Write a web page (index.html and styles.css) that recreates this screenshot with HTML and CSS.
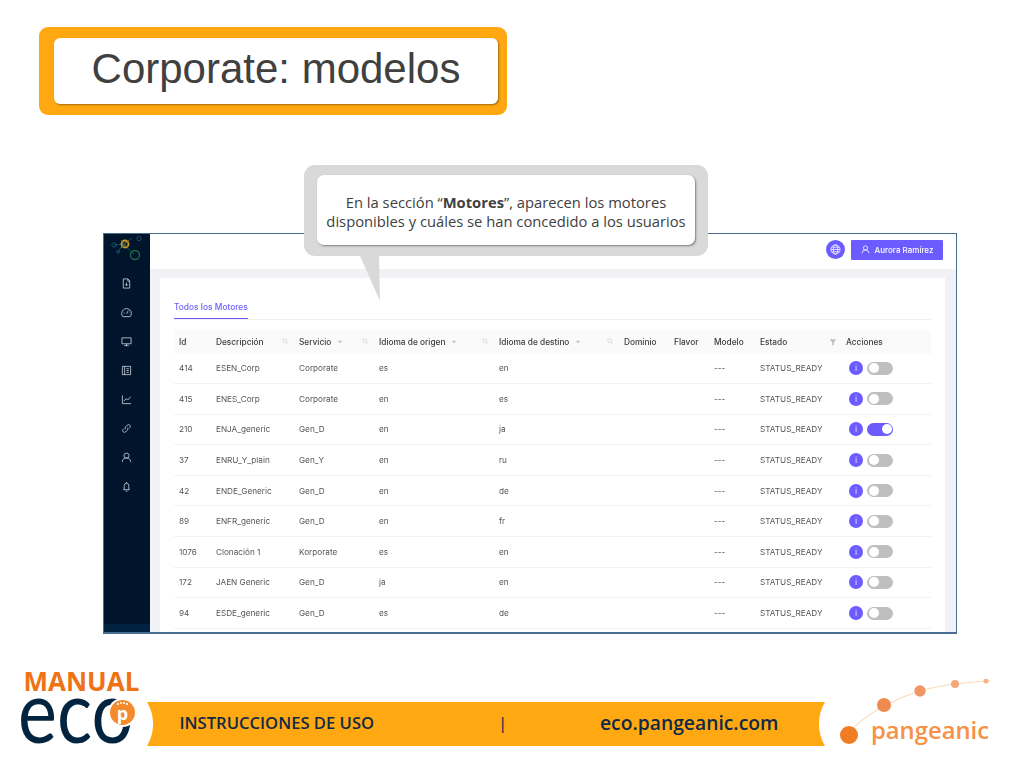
FILE: index.html
```html
<!DOCTYPE html>
<html lang="es">
<head>
<meta charset="utf-8">
<title>Corporate: modelos</title>
<link rel="stylesheet" href="styles.css">
</head>
<body>
<svg class="defs" width="0" height="0">
  <symbol id="s" viewBox="0 0 12 12"><circle cx="5" cy="5" r="3.6" fill="none" stroke="currentColor" stroke-width="1"/><path d="M7.8 7.8L11 11" stroke="currentColor" stroke-width="1"/></symbol>
  <symbol id="c" viewBox="0 0 10 6"><path d="M1 1h8L5 5z" fill="currentColor"/></symbol>
</svg>
<main class="slide">
  <div class="title-frame"><h1 class="title">Corporate: modelos</h1></div>

  <section class="window">
    <nav class="sidebar">
      <svg class="logo" viewBox="0 0 34 28" width="34" height="28" fill="none">
        <path d="M3 10L12 9L23 19M14 8L21 3M7 17L12 9" stroke="#0b5c63" stroke-width="1"/>
        <circle cx="14" cy="9" r="3.500" stroke="#c79a2a" stroke-width="1.800"/>
        <path d="M10 5L17 13M18 5L10 13" stroke="#8a6a2a" stroke-width=".8"/>
        <circle cx="24" cy="20" r="4.500" stroke="#1d6e46" stroke-width="1.300"/>
        <circle cx="3" cy="10" r="2.200" stroke="#14506e"/>
        <circle cx="28" cy="3.500" r="2.200" stroke="#14506e"/>
        <circle cx="7" cy="17" r="1.300" stroke="#14506e"/>
      </svg>
      <svg class="nav-icon" viewBox="0 0 12 12"><path d="M2.500 1h5l2 2v8h-7zM7.500 1v2.500h2M6 5v3.500M4.500 7l1.500 1.500L7.500 7"/></svg>
      <svg class="nav-icon" viewBox="0 0 12 12"><path d="M2 10.500a5.300 5.300 0 1 1 8 0zM6 7.500l2-3.500M3 6.500h1M8.500 6.500h.5"/></svg>
      <svg class="nav-icon" viewBox="0 0 12 12"><path d="M1 2h10v6.500H1zM6 8.500V10.500M3.500 10.500h5"/></svg>
      <svg class="nav-icon" viewBox="0 0 12 12"><path d="M1.500 1.500h9v9h-9zM4 1.500v9M6 4h2.500M6 6h2.500M6 8h2.500"/></svg>
      <svg class="nav-icon" viewBox="0 0 12 12"><path d="M1.500 1.500v9h9.500M3 8l2.500-3 2 1.500L10.500 3"/></svg>
      <svg class="nav-icon" viewBox="0 0 12 12"><path d="M5 7a2 2 0 0 1 0-2.800l2-2a2 2 0 0 1 2.800 2.800L9 5.800M7 5a2 2 0 0 1 0 2.800l-2 2a2 2 0 0 1-2.800-2.800L3 6.200"/></svg>
      <svg class="nav-icon" viewBox="0 0 12 12"><circle cx="6" cy="4" r="2.800"/><path d="M1.500 11a4.500 4.500 0 0 1 9 0"/></svg>
      <svg class="nav-icon" viewBox="0 0 12 12"><path d="M2.500 9.500h7M3.500 9.500V5a2.500 2.500 0 0 1 5 0v4.500M6 1v1.500M5 11h2"/></svg>
      <div class="sidebar-foot"></div>
    </nav>
    <div class="main">
      <header class="topbar">
        <span class="globe"><svg viewBox="0 0 12 12" width="11" height="11" fill="none" stroke="#fff" stroke-width=".8"><circle cx="6" cy="6" r="5"/><ellipse cx="6" cy="6" rx="2.300" ry="5"/><path d="M1 6h10M1.700 3.500h8.600M1.700 8.500h8.600"/></svg></span>
        <span class="user"><svg viewBox="0 0 12 12" width="9" height="9" fill="none" stroke="#fff" stroke-width="1"><circle cx="6" cy="4" r="2.800"/><path d="M1.500 11a4.500 4.500 0 0 1 9 0"/></svg>Aurora Ramírez</span>
      </header>
      <div class="content">
        <div class="card">
          <div class="tabs"><span class="tab">Todos los Motores</span></div>
          <div class="row head">
            <span>Id</span>
            <span class="hcell">Descripción<svg class="s-ic"><use href="#s"/></svg></span>
            <span class="hcell">Servicio<svg class="c-ic"><use href="#c"/></svg><svg class="s-ic"><use href="#s"/></svg></span>
            <span class="hcell">Idioma de origen<svg class="c-ic"><use href="#c"/></svg><svg class="s-ic"><use href="#s"/></svg></span>
            <span class="hcell">Idioma de destino<svg class="c-ic"><use href="#c"/></svg><svg class="s-ic"><use href="#s"/></svg></span>
            <span>Dominio</span><span>Flavor</span><span>Modelo</span>
            <span class="hcell">Estado<svg class="f-ic" viewBox="0 0 10 10"><path d="M1 1.500h8L6 5.500V9H4V5.500z"/></svg></span>
            <span>Acciones</span>
          </div>
          <div class="row"><span>414</span><span>ESEN_Corp</span><span>Corporate</span><span>es</span><span>en</span><span></span><span></span><span>---</span><span>STATUS_READY</span><span class="acts"><b class="info">i</b><i class="toggle"></i></span></div>
          <div class="row"><span>415</span><span>ENES_Corp</span><span>Corporate</span><span>en</span><span>es</span><span></span><span></span><span>---</span><span>STATUS_READY</span><span class="acts"><b class="info">i</b><i class="toggle"></i></span></div>
          <div class="row"><span>210</span><span>ENJA_generic</span><span>Gen_D</span><span>en</span><span>ja</span><span></span><span></span><span>---</span><span>STATUS_READY</span><span class="acts"><b class="info">i</b><i class="toggle on"></i></span></div>
          <div class="row"><span>37</span><span>ENRU_Y_plain</span><span>Gen_Y</span><span>en</span><span>ru</span><span></span><span></span><span>---</span><span>STATUS_READY</span><span class="acts"><b class="info">i</b><i class="toggle"></i></span></div>
          <div class="row"><span>42</span><span>ENDE_Generic</span><span>Gen_D</span><span>en</span><span>de</span><span></span><span></span><span>---</span><span>STATUS_READY</span><span class="acts"><b class="info">i</b><i class="toggle"></i></span></div>
          <div class="row"><span>89</span><span>ENFR_generic</span><span>Gen_D</span><span>en</span><span>fr</span><span></span><span></span><span>---</span><span>STATUS_READY</span><span class="acts"><b class="info">i</b><i class="toggle"></i></span></div>
          <div class="row"><span>1076</span><span>Clonación 1</span><span>Korporate</span><span>es</span><span>en</span><span></span><span></span><span>---</span><span>STATUS_READY</span><span class="acts"><b class="info">i</b><i class="toggle"></i></span></div>
          <div class="row"><span>172</span><span>JAEN Generic</span><span>Gen_D</span><span>ja</span><span>en</span><span></span><span></span><span>---</span><span>STATUS_READY</span><span class="acts"><b class="info">i</b><i class="toggle"></i></span></div>
          <div class="row"><span>94</span><span>ESDE_generic</span><span>Gen_D</span><span>es</span><span>de</span><span></span><span></span><span>---</span><span>STATUS_READY</span><span class="acts"><b class="info">i</b><i class="toggle"></i></span></div>
        </div>
      </div>
    </div>
  </section>

  <aside class="callout">
    <p class="callout-box">En la sección “<strong>Motores</strong>”, aparecen los motores disponibles y cuáles se han concedido a los usuarios</p>
  </aside>

  <footer class="footer">
    <svg class="bar-shape" width="700" height="44" viewBox="0 0 700 44"><path d="M3 0A43 43 0 0 1 3 44L681 44A43 43 0 0 1 681 0Z" fill="#ffa811"/></svg>
    <span class="bar-a">INSTRUCCIONES DE USO</span>
    <span class="bar-sep">|</span>
    <span class="bar-b">eco.pangeanic.com</span>
  </footer>

  <div class="brand">
    <span class="manual">MANUAL</span>
    <span class="eco">eco</span>
    <span class="badge">p</span>
  </div>

  <div class="pangeanic">
    <svg class="pg-mark" width="170" height="70" viewBox="0 0 170 70" fill="none">
      <path d="M12 57C30 35 55 22 86 12C110 5 130 3 157 2" stroke="#fbdcb8" stroke-width="1.200"/>
      <circle cx="15" cy="56" r="9" fill="#f07c24"/>
      <circle cx="50" cy="26" r="7" fill="#ef8a50"/>
      <circle cx="86" cy="12" r="5.700" fill="#f09765"/>
      <circle cx="121" cy="5" r="4" fill="#f3a678"/>
      <circle cx="152" cy="2" r="2.500" fill="#f5b48c"/>
    </svg>
    <span class="pg-text">pangeanic</span>
  </div>
</main>
</body>
</html>
```

FILE: styles.css
```css
* { box-sizing: border-box; }
html, body { margin: 0; padding: 0; background: #fff; }
.defs { position: absolute; }
.slide { position: relative; width: 1024px; height: 768px; overflow: hidden; background: #fff; }

.title-frame { position: absolute; left: 39px; top: 27px; width: 468px; height: 88px; padding: 11px 9px 11px 15px; background: #ffa811; border-radius: 9px; }
.title { margin: 0; height: 66px; background: #fff; border-radius: 6px; box-shadow: 1px 1px 2px #9c6a10; font: 400 42px/61px "Liberation Sans", Arial, sans-serif; color: #404040; text-align: center; }

.window { position: absolute; left: 103px; top: 233px; width: 854px; height: 401px; display: flex; border: 1px solid #4a6d92; border-bottom-width: 2px; background: #f0f2f5; filter: blur(.3px); }
.sidebar { width: 46px; background: #00152b; display: flex; flex-direction: column; align-items: center; position: relative; padding-right: 2px; }
.logo { margin: 1px -4px 15px 0; flex: none; }
.nav-icon { width: 11px; height: 11px; margin: 0 0 18px 0; flex: none; fill: none; stroke: #c9d0d8; stroke-width: .9; }
.sidebar-foot { position: absolute; left: 0; right: 0; bottom: 0; height: 8px; background: #002140; }

.main { flex: 1; min-width: 0; display: flex; flex-direction: column; }
.topbar { height: 35px; background: #fff; display: flex; align-items: center; justify-content: flex-end; gap: 6px; padding: 0 13px 4px 0; flex: none; }
.globe { width: 19px; height: 19px; border-radius: 50%; background: #6c5cff; display: flex; align-items: center; justify-content: center; }
.user { width: 92px; height: 20px; background: #6c5cff; border-radius: 1px; display: flex; align-items: center; justify-content: center; gap: 5px; color: #fff; font: 500 8px "Inter", sans-serif; }

.content { flex: 1; min-height: 0; padding: 9px 11px 0 10px; }
.card { height: 100%; background: #fff; padding: 0 14px; overflow: hidden; font: 400 8.200px "Inter", sans-serif; color: #555; }
.tabs { height: 42px; border-bottom: 1px solid #f0f0f0; margin-bottom: 10px; display: flex; align-items: flex-end; }
.tab { display: block; height: 20px; width: 74px; border-bottom: 1.500px solid #6c5cff; color: #6c5cff; font-weight: 500; font-size: 8.400px; line-height: 12px; white-space: nowrap; padding-top: 2px; }

.row { display: grid; grid-template-columns: 37px 83px 80px 120px 125px 50px 40px 46px 86px 85px; padding-left: 5px; height: 30.600px; align-items: center; border-bottom: 1px solid #f2f2f2; white-space: nowrap; }
.row.head { height: 23.500px; background: #fafafa; border-bottom: 0; color: #3d3d3d; font-weight: 500; font-size: 8.300px; }
.row > span { display: block; }
.row > .hcell { display: flex; align-items: center; position: relative; }
.s-ic { position: absolute; right: 11px; top: 50%; margin-top: -3.500px; width: 6.500px; height: 6.500px; color: #c4c4c4; }
.c-ic { width: 6px; height: 4px; margin-left: 6px; color: #c4c4c4; }
.f-ic { position: absolute; right: 9.500px; top: 50%; margin-top: -4px; width: 8px; height: 8px; fill: #bdbdbd; }
.acts { display: flex !important; align-items: center; gap: 4px; margin-left: 3px; }
.info { width: 14px; height: 14px; border-radius: 50%; background: #6c5cff; color: #dcd8ff; font: 400 9px/14px "Inter", sans-serif; text-align: center; flex: none; }
.toggle { position: relative; width: 26px; height: 13px; border-radius: 7px; background: #bfbfbf; flex: none; }
.toggle::after { content: ""; position: absolute; left: 1.500px; top: 1.500px; width: 10px; height: 10px; border-radius: 50%; background: #fff; }
.toggle.on { background: #6c5cff; }
.toggle.on::after { left: 14.500px; }

.callout { position: absolute; left: 304px; top: 165px; width: 404px; height: 91px; padding: 10px 13px 11px; background: #d9d9d9; border-radius: 11px; }
.callout::after { content: ""; position: absolute; left: 56px; top: 91px; width: 21px; height: 45px; background: #d9d9d9; clip-path: polygon(0 0, 19px 0, 20px 45px); }
.callout-box { margin: 0; height: 70px; padding: 18px 4px 0; background: #fff; border-radius: 7px; box-shadow: 1px 1px 2px #7c7c7c; font: 400 14.750px/19px "Open Sans", sans-serif; color: #404040; text-align: center; }
.callout-box strong { font-weight: 700; }

.footer { position: absolute; left: 144px; top: 702px; width: 700px; height: 44px; font-family: "Open Sans", sans-serif; color: #0f2a47; font-weight: 600; }
.bar-shape { position: absolute; left: 0; top: 0; }
.bar-a, .bar-sep, .bar-b { position: absolute; white-space: nowrap; }
.bar-a { left: 35.500px; top: 9px; font-size: 16.600px; line-height: 24px; }
.bar-sep { left: 354px; top: 8px; font-size: 17px; line-height: 26px; font-weight: 400; }
.bar-b { left: 456px; top: 7px; font-size: 19.300px; line-height: 28px; }

.brand { position: absolute; left: 20px; top: 666px; width: 125px; height: 90px; }
.manual { position: absolute; left: 3.500px; top: 0; font: 700 26px/30px "Open Sans", sans-serif; color: #ee7314; white-space: nowrap; }
.eco { position: absolute; left: -2px; top: 3px; font: 400 76px/80px "Lato", sans-serif; color: #03243f; white-space: nowrap; transform: scale(.97, 1.16); transform-origin: left center; }
.badge { position: absolute; left: 90px; top: 34px; width: 25px; height: 25px; border-radius: 50%; background: #f58a2c; box-shadow: 0 0 0 2px #fff; color: #fff; font: 700 18px/26px "Open Sans", sans-serif; text-align: center; }
.badge::before { content: ""; position: absolute; left: 7px; top: 3px; width: 1.500px; height: 1.500px; border-radius: 50%; background: #fff; box-shadow: 3px -1px 0 #fff, 6px -1px 0 #fff, 9px 0 0 #fff; }

.pangeanic { position: absolute; left: 834px; top: 679px; width: 170px; height: 70px; }
.pg-mark { position: absolute; left: 0; top: 0; }
.pg-text { position: absolute; left: 37px; top: 33px; font: 600 23.800px/36px "Open Sans", sans-serif; color: #f69246; white-space: nowrap; }
```
